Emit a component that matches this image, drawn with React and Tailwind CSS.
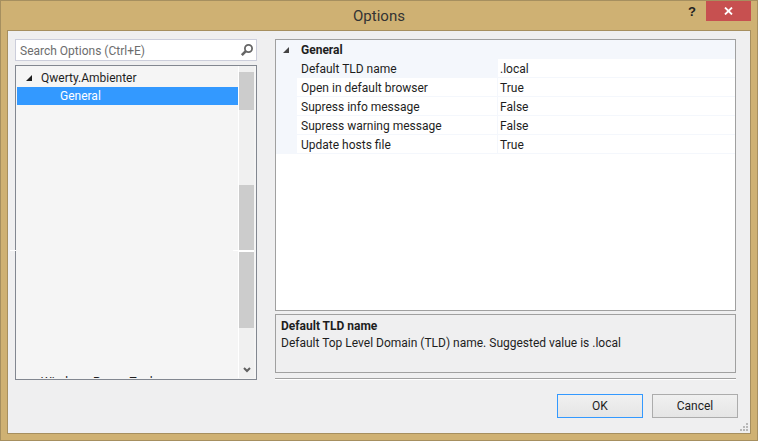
const rows = [
  ['Default TLD name', '.local'],
  ['Open in default browser', 'True'],
  ['Supress info message', 'False'],
  ['Supress warning message', 'False'],
  ['Update hosts file', 'True'],
];

function SearchIcon() {
  return (
    <svg width="14" height="14" viewBox="0 0 14 14" fill="none">
      <circle cx="8.5" cy="5.5" r="3.6" stroke="#666" strokeWidth="1.8" />
      <path d="M5.8 8.2 1.8 12.2" stroke="#666" strokeWidth="2.6" />
    </svg>
  );
}

function Expander({ color = '#1e1e1e', size = 6 }) {
  return (
    <svg width={size} height={size} viewBox="0 0 7 7" className="shrink-0">
      <path d="M7 0V7H0Z" fill={color} />
    </svg>
  );
}

function PropertyRow({ name, value, selected }) {
  return (
    <div className="flex h-[19px] border-b border-[#f4f7fc]">
      <div className="w-[21px] shrink-0 bg-[#f4f7fc]" />
      <div className={`w-[200px] shrink-0 pl-[4px] pt-px leading-[19px] ${selected ? 'bg-[#f4f7fc]' : ''}`}>{name}</div>
      <div className="w-px shrink-0 bg-[#f4f7fc]" />
      <div className="flex-1 pl-[2px] pt-px leading-[19px]">{value}</div>
    </div>
  );
}

export default function App() {
  return (
    <div
      className="flex h-[441px] w-[758px] flex-col overflow-hidden border border-[#a68f5f] bg-[#cfb173] text-[12px] text-[#1e1e1e]"
      style={{ fontFamily: 'Roboto, "Noto Sans", sans-serif' }}
    >
      {/* title bar */}
      <div className="relative flex h-[29px] shrink-0 items-center justify-center pt-px">
        <span className="text-[15px] leading-none text-[#333]">Options</span>
        <span className="absolute right-[61px] top-[1px] text-[13px] font-bold leading-[20px] text-[#222]" style={{ fontFamily: '"Liberation Sans", sans-serif' }}>?</span>
        <div className="absolute right-[6px] top-0 flex h-[20px] w-[45px] items-center justify-center bg-[#c75050]">
          <svg width="9" height="8" viewBox="0 0 9 8">
            <path d="M1 .5 8 7.5M8 .5 1 7.5" stroke="#fff" strokeWidth="1.8" />
          </svg>
        </div>
      </div>

      {/* client area */}
      <div className="relative mx-[6px] mb-[6px] flex min-h-0 flex-1 flex-col border border-[#a68f5f] bg-[#efeff0]">
        <div className="flex h-[349px] shrink-0 pl-[7px] pr-[14px] pt-[8px]">
          {/* left column */}
          <div className="flex w-[242px] shrink-0 flex-col gap-[4px]">
            <div className="flex h-[22px] shrink-0 items-center justify-between border border-[#ccceDB] bg-white pl-[4px] pr-[2px]">
              <span className="pt-px text-[#6d6d6d]">Search Options (Ctrl+E)</span>
              <SearchIcon />
            </div>
            <div className="flex min-h-0 flex-1 border border-[#828790] bg-[#f5f5f5] pb-px pl-px pr-[2px]">
              <div className="flex min-w-0 flex-1 flex-col overflow-hidden pt-[3px]">
                <div className="flex h-[18px] shrink-0 items-center pl-[9px]">
                  <Expander />
                  <span className="ml-[9px]">Qwerty.Ambienter</span>
                </div>
                <div className="flex h-[18px] shrink-0 items-center bg-[#3399ff] pl-[43px] text-white">General</div>
                <div className="h-[268px] shrink-0" />
                <div className="h-[18px] shrink-0 pl-[24px] leading-[18px]">Windows Power Tools</div>
              </div>
              <div className="flex w-[16px] shrink-0 flex-col border-l border-white bg-[#f0f0f0]">
                <div className="h-[6px] shrink-0" />
                <div className="h-[38px] shrink-0 bg-[#cccccc]" />
                <div className="h-[75px] shrink-0" />
                <div className="h-[65px] shrink-0 bg-[#cccccc]" />
                <div className="h-[2px] shrink-0 bg-white" />
                <div className="h-[76px] shrink-0 bg-[#cccccc]" />
                <div className="flex flex-1 items-end justify-center pb-[5px]">
                  <svg width="8" height="6" viewBox="0 0 8 6">
                    <path d="M1 1 4 4 7 1" fill="none" stroke="#606060" strokeWidth="2" />
                  </svg>
                </div>
              </div>
            </div>
          </div>

          {/* right column */}
          <div className="ml-[18px] flex min-w-0 flex-1 flex-col gap-[3px]">
            <div className="flex h-[272px] shrink-0 flex-col border border-[#a0a0a0] bg-white">
              <div className="flex h-[19px] shrink-0 items-center bg-[#f4f7fc] font-bold">
                <div className="flex w-[21px] shrink-0 justify-center pr-px">
                  <Expander color="#444" size={6} />
                </div>
                <span className="pl-[4px]">General</span>
              </div>
              {rows.map((row, i) => (
                <PropertyRow key={row[0]} name={row[0]} value={row[1]} selected={i === 0} />
              ))}
            </div>
            <div className="h-[59px] shrink-0 border border-[#a0a0a0] px-[5px] pt-[2px] leading-[18px]">
              <div className="font-bold">Default TLD name</div>
              <div className="-mt-px">Default Top Level Domain (TLD) name. Suggested value is .local</div>
            </div>
            <div className="mt-[2px] h-[2px] shrink-0 border-t border-[#a0a0a0] bg-white" />
          </div>
        </div>

        {/* buttons */}
        <div className="flex shrink-0 justify-end gap-[9px] pr-[12px] pt-[14px]">
          <button className="h-[24px] w-[86px] border border-[#3399ff] bg-gradient-to-b from-[#f0f0f0] to-[#e5e5e5] text-[#1e1e1e]">OK</button>
          <button className="h-[24px] w-[86px] border border-[#acacac] bg-gradient-to-b from-[#f0f0f0] to-[#e5e5e5] text-[#1e1e1e]">Cancel</button>
        </div>

        {/* resize grip */}
        <svg width="9" height="9" viewBox="0 0 9 9" className="absolute bottom-[1px] right-[1px]" fill="#b8b8b8">
          <rect x="6" y="0" width="2" height="2" />
          <rect x="3" y="3" width="2" height="2" />
          <rect x="6" y="3" width="2" height="2" />
          <rect x="0" y="6" width="2" height="2" />
          <rect x="3" y="6" width="2" height="2" />
          <rect x="6" y="6" width="2" height="2" />
        </svg>

        {/* stray white ticks painted over the tree border */}
        <div className="absolute left-[2px] top-[219px] h-px w-[6px] bg-white" />
        <div className="absolute left-[225px] top-[219px] h-px w-[21px] bg-white" />
      </div>
    </div>
  );
}
